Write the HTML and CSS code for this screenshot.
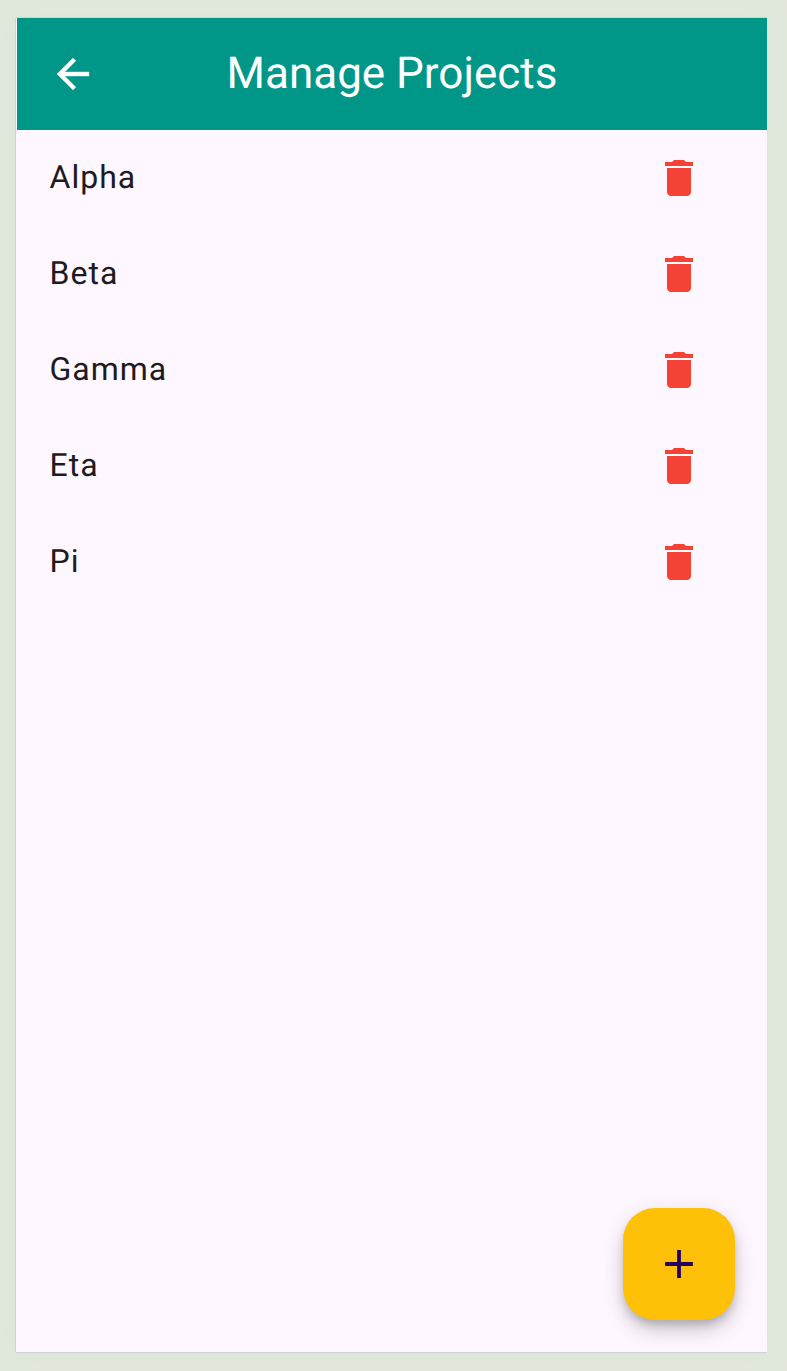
FILE: index.html
```html
<!DOCTYPE html>
<html lang="en">
<head>
<meta charset="utf-8">
<title>Manage Projects</title>
<link rel="stylesheet" href="styles.css">
</head>
<body>
<main class="screen">
  <header class="app-bar">
    <button class="back" aria-label="Back"><svg viewBox="0 0 24 24"><path d="M20 11H7.83l5.59-5.59L12 4l-8 8 8 8 1.41-1.41L7.83 13H20v-2z"/></svg></button>
    <h1 class="title">Manage Projects</h1>
  </header>
  <ul class="projects">
    <li class="project"><span class="name">Alpha</span><button class="delete" aria-label="Delete"><svg viewBox="0 0 24 24"><path d="M6 19c0 1.100.9 2 2 2h8c1.100 0 2-.9 2-2V7H6v12zM19 4h-3.500l-1-1h-5l-1 1H5v2h14V4z"/></svg></button></li>
    <li class="project"><span class="name">Beta</span><button class="delete" aria-label="Delete"><svg viewBox="0 0 24 24"><path d="M6 19c0 1.100.9 2 2 2h8c1.100 0 2-.9 2-2V7H6v12zM19 4h-3.500l-1-1h-5l-1 1H5v2h14V4z"/></svg></button></li>
    <li class="project"><span class="name">Gamma</span><button class="delete" aria-label="Delete"><svg viewBox="0 0 24 24"><path d="M6 19c0 1.100.9 2 2 2h8c1.100 0 2-.9 2-2V7H6v12zM19 4h-3.500l-1-1h-5l-1 1H5v2h14V4z"/></svg></button></li>
    <li class="project"><span class="name">Eta</span><button class="delete" aria-label="Delete"><svg viewBox="0 0 24 24"><path d="M6 19c0 1.100.9 2 2 2h8c1.100 0 2-.9 2-2V7H6v12zM19 4h-3.500l-1-1h-5l-1 1H5v2h14V4z"/></svg></button></li>
    <li class="project"><span class="name">Pi</span><button class="delete" aria-label="Delete"><svg viewBox="0 0 24 24"><path d="M6 19c0 1.100.9 2 2 2h8c1.100 0 2-.9 2-2V7H6v12zM19 4h-3.500l-1-1h-5l-1 1H5v2h14V4z"/></svg></button></li>
  </ul>
  <button class="fab" aria-label="Add project"><svg viewBox="0 0 24 24"><path d="M18.950 12.950h-6v6h-1.900v-6h-6v-1.900h6v-6h1.900v6h6z"/></svg></button>
</main>
</body>
</html>
```
FILE: styles.css
```css
* { box-sizing: border-box; }
body {
  margin: 0;
  height: 1371px;
  padding: 18px 20px 19px 16px;
  background: #e2e9da;
  font-family: Roboto, "Liberation Sans", sans-serif;
  text-rendering: geometricPrecision;
}
button { border: 0; padding: 0; background: none; display: flex; align-items: center; justify-content: center; }
svg { width: 48px; height: 48px; display: block; fill: currentColor; }
.screen {
  height: 1334px;
  padding-left: 1px;
  display: flex;
  flex-direction: column;
  background: #fef7ff;
  box-shadow: -1px 0 0 #d0d6d0, 0 1px 0 #d0d3d3, 0 -1px 0 #cfd6cf, 0 0 20px 4px #dde5db;
}
.app-bar {
  height: 112px;
  display: grid;
  grid-template-columns: 112px 1fr 112px;
  align-items: center;
  background: #009688;
  color: #fff;
}
.back { width: 112px; height: 112px; color: #fff; }
.back svg { stroke: currentColor; stroke-width: .2; }
.title { margin: 0; padding-bottom: 2px; text-align: center; font-size: 44px; font-weight: 400; line-height: 56px; white-space: nowrap; }
.projects { list-style: none; margin: 0; padding: 0; flex: 1; }
.project {
  height: 96px;
  padding: 0 40px 0 32.5px;
  display: flex;
  align-items: center;
  justify-content: space-between;
  color: #1d1b20;
  font-size: 32px;
  letter-spacing: 1px;
}
.name { padding-bottom: 2px; }
.delete { width: 96px; height: 96px; color: #f44336; }
.fab {
  width: 112px;
  height: 112px;
  margin: 0 32px 32px auto;
  border-radius: 32px;
  background: #ffc107;
  color: #21005d;
  box-shadow: 0 6px 10px -2px rgba(0,0,0,.2), 0 12px 20px rgba(0,0,0,.14), 0 2px 24px rgba(0,0,0,.06);
}
```
